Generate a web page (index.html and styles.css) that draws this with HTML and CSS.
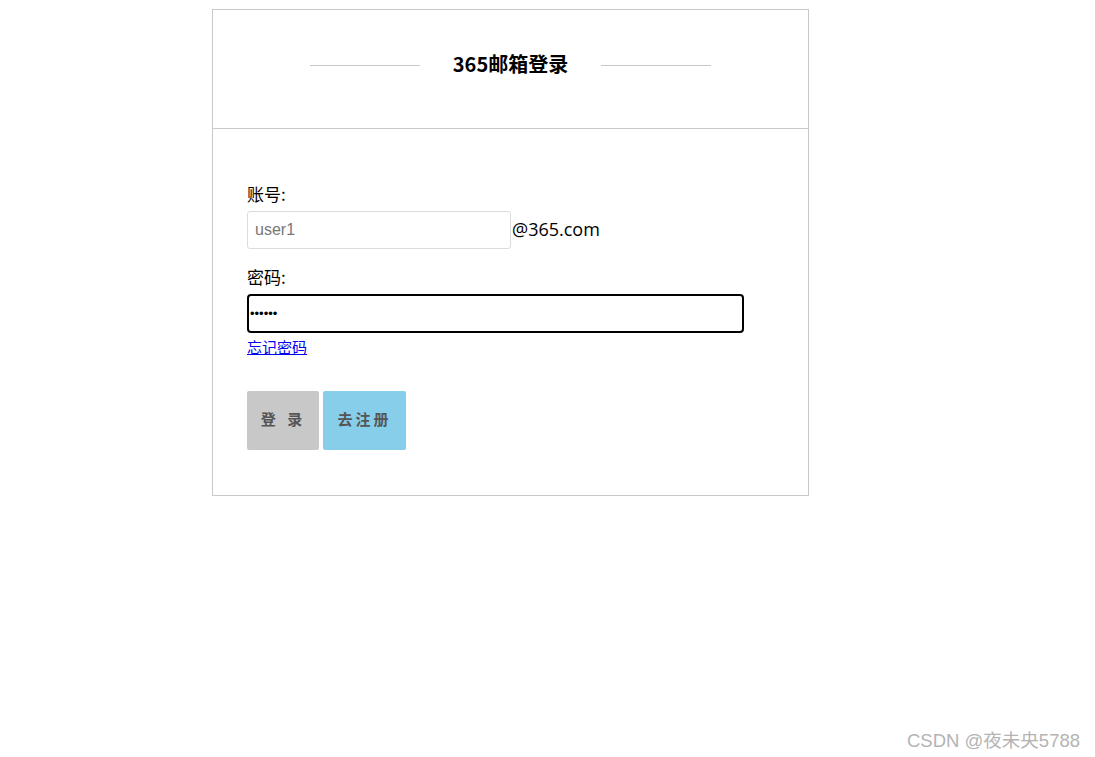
FILE: index.html
```html
<!DOCTYPE html>
<html lang="zh">
<head>
<meta charset="utf-8">
<title>365邮箱登录</title>
<link rel="stylesheet" href="styles.css">
</head>
<body>
<div class="card">
  <div class="card-head">
    <span class="line"></span>
    <h1 class="title">365邮箱登录</h1>
    <span class="line"></span>
  </div>
  <form class="card-body">
    <label class="label">账号:</label>
    <div class="row">
      <input class="input input-user" type="text" value="user1">
      <span class="suffix">@365.com</span>
    </div>
    <label class="label">密码:</label>
    <div class="row">
      <input class="input input-pass" type="password" value="123456">
    </div>
    <a class="forgot" href="#">忘记密码</a>
    <div class="buttons">
      <button type="button" class="btn btn-login">登 录</button>
      <button type="button" class="btn btn-reg">去注册</button>
    </div>
  </form>
</div>
<div class="watermark">CSDN @夜未央5788</div>
</body>
</html>
```

FILE: styles.css
```css
html, body {
  margin: 0;
  padding: 0;
  background: #fff;
}
body {
  font-family: "Noto Sans CJK SC", "Open Sans", sans-serif;
  color: #000;
  height: 757px;
  position: relative;
}
.card {
  box-sizing: border-box;
  width: 597px;
  margin: 9px 0 0 212px;
  border: 1px solid #c8c8c8;
}
.card-head {
  height: 110px;
  padding-bottom: 8px;
  border-bottom: 1px solid #c8c8c8;
  display: flex;
  align-items: center;
  justify-content: center;
  gap: 33px;
}
.line {
  width: 110px;
  height: 1px;
  background: #c8c8c8;
  margin-top: 1px;
}
.title {
  margin: 0;
  font-size: 20px;
  font-weight: bold;
  line-height: 28px;
  margin-top: -2px;
}
.card-body {
  padding: 52px 34px 45px 34px;
  display: flex;
  flex-direction: column;
  align-items: flex-start;
}
.label {
  font-size: 17px;
  line-height: 26px;
  height: 26px;
  margin-bottom: 4px;
}
.row {
  display: flex;
  align-items: center;
}
.input {
  box-sizing: border-box;
  font-family: "Liberation Sans", Arial, sans-serif;
  outline: none;
}
.input-user {
  width: 264px;
  height: 38px;
  border: 1px solid #dcdcdc;
  border-radius: 3px;
  padding: 0 7px;
  font-size: 16px;
  color: #777;
  margin-bottom: 15px;
}
.suffix {
  font-size: 18px;
  margin-left: 1px;
  margin-bottom: 17px;
  font-family: "Open Sans", "Noto Sans CJK SC", sans-serif;
}
.input-pass {
  width: 497px;
  height: 39px;
  border: 2px solid #000;
  border-radius: 4px;
  padding: 0 1px;
  font-size: 13px;
  color: #000;
}
.forgot {
  font-size: 15px;
  line-height: 22px;
  color: #0000ee;
  text-decoration: underline;
  margin-top: 3px;
}
.buttons {
  display: flex;
  gap: 4px;
  margin-top: 33px;
}
.btn {
  height: 59px;
  border: none;
  border-radius: 2px;
  font-family: "Noto Sans CJK SC", sans-serif;
  font-size: 15px;
  font-weight: bold;
  color: #555;
  letter-spacing: 3px;
  padding: 0 0 4px 0;
  cursor: pointer;
}
.btn-login {
  width: 72px;
  background: #c8c8c8;
  word-spacing: 2px;
}
.btn-reg {
  width: 83px;
  background: #87ceeb;
}
.watermark {
  position: absolute;
  right: 15px;
  top: 726px;
  font-size: 18.5px;
  color: #b4b4b4;
  font-family: "Liberation Sans", "Noto Sans CJK SC", sans-serif;
}
```
